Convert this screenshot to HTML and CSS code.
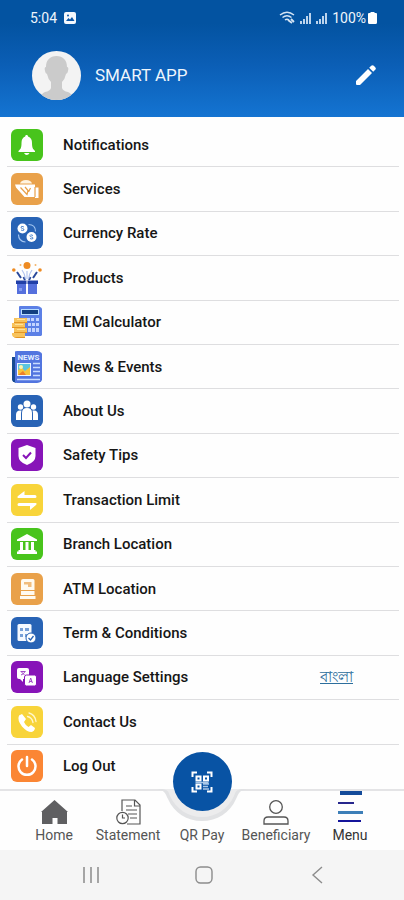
FILE: index.html
```html
<!DOCTYPE html>
<html lang="en">
<head>
<meta charset="utf-8">
<meta name="viewport" content="width=device-width, initial-scale=1">
<title>Smart App</title>
<link rel="stylesheet" href="styles.css">
</head>
<body>
<div class="app">
  <header class="header">
    <div class="status">
      <div class="status-group">
        <span>5:04</span>
        <svg width="12" height="12" viewBox="0 0 12 12"><rect width="12" height="12" rx="2" fill="#f4f8fd"/><path d="M2 9 4.500 6 6 7.500 8 5 10.500 9z" fill="#0a55a6"/><circle cx="4" cy="3.500" r="1" fill="#0a55a6"/></svg>
      </div>
      <div class="status-group status-right">
        <svg width="17" height="13" viewBox="0 0 17 13" fill="none" stroke="#d5e5f5" stroke-width="1.500"><path d="M1 4Q8 -1.500 15 4M3.500 6.500Q8 3 12.500 6.500M6 9Q8 7.500 10 9"/><path d="M9 9l4 3M12 8l3 3" stroke-width="1.800"/></svg>
        <svg width="12" height="12" viewBox="0 0 12 12" fill="#bcd4ed"><path d="M0 9h2v3H0zM3 7h2v5H3zM6 4h2v8H6zM9 1h2v11H9z"/></svg>
        <svg width="12" height="12" viewBox="0 0 12 12" fill="#bcd4ed"><path d="M0 9h2v3H0zM3 7h2v5H3zM6 4h2v8H6zM9 1h2v11H9z"/></svg>
        <span class="battery">100%<svg width="9" height="12" viewBox="0 0 9 12" fill="#fff"><path d="M2.500 0h4v1H8q1 0 1 1v8.500Q9 12 7.500 12h-6Q0 12 0 10.500V2q0-1 1-1h1.500z"/></svg></span>
      </div>
    </div>
    <div class="profile">
      <svg class="avatar" viewBox="0 0 49 49"><defs><clipPath id="face"><circle cx="24.500" cy="24.500" r="24.500"/></clipPath></defs><circle cx="24.500" cy="24.500" r="24.500" fill="#f3f3f3"/><path clip-path="url(#face)" fill="#cbcbcb" d="M24.500 5C31 5 35 9 35 16q2 0 1 4-.5 3-2 3-1 5-4 8v6q1 3 6 4 4 1 5 8H8q1-7 5-8 5-1 6-4v-6q-3-3-4-8-1.500 0-2-3-1-4 1-4C14 9 18 5 24.500 5z"/></svg>
      <h1 class="name">SMART APP</h1>
      <button class="edit" type="button" aria-label="Edit profile"><svg width="20" height="20" viewBox="0 0 20 20" fill="#fff"><path d="M0 16 12 4l4 4L4 20H1q-1 0-1-1zM13.200 2.800l2-2q1.300-1.300 2.600 0l1.400 1.400q1.300 1.300 0 2.600l-2 2z"/></svg></button>
    </div>
  </header>

  <main class="list">
    <a class="row" href="#notifications"><svg class="icon green" viewBox="0 0 32 32" fill="#fff"><path d="M15.500 6c1 0 1.500.6 1.500 1.500 3 .8 4 3.500 4 6.500 0 5 1 6 3 8v1H7.500v-1c2-2 3-3 3-8 0-3 1-5.700 3.700-6.500C14.200 6.600 14.700 6 15.500 6zM13 24h5.500q-1 2-2.750 2T13 24z"/></svg><span>Notifications</span></a>
    <a class="row" href="#services"><svg class="icon orange" viewBox="0 0 32 32"><path d="M9 10.500Q10 7 15 7t6 3.500z" fill="#fff3e0"/><path d="M4 11.500h20v3h3.500V25H24v-1H13.500L5 14.500z" fill="#fff"/><path d="m9.500 14.500 6.500 7 1-4-3-3.500M19.500 15l-2 4M24 14v10" fill="none" stroke="#e9a14a" stroke-width="1.200"/></svg><span>Services</span></a>
    <a class="row" href="#rates"><svg class="icon blue" viewBox="0 0 32 32" fill="#fff"><circle cx="11.500" cy="11.500" r="5"/><circle cx="20.500" cy="20" r="5"/><path d="M17.500 7.500q7 0 7 7M7.500 17.500q0 7 7 7.500" fill="none" stroke="#9fc3f0" stroke-width="1.200"/><path d="M13 10q-3-1.500-3 0t1.500 1.500 1.500 1.500q-1 1-3 0M22 18.500q-3-1.500-3 0t1.500 1.500 1.500 1.500q-1 1-3 0" fill="none" stroke="#3d7cc9" stroke-width=".9"/></svg><span>Currency Rate</span></a>
    <a class="row" href="#products"><svg class="icon" viewBox="0 0 32 32"><circle cx="16" cy="3.500" r="3.500" fill="#ee8b22"/><circle cx="2.800" cy="8" r="1.800" fill="#ee8b22"/><circle cx="29" cy="8" r="1.800" fill="#ee8b22"/><circle cx="9.500" cy="3" r="1" fill="#f3b46a"/><circle cx="24.500" cy="3" r="1" fill="#f3b46a"/><path d="M6 10l4 6M26 10l-4 6M12.500 15l1.500 3M19.500 15 18 18" fill="none" stroke="#2b4a9b" stroke-width="2"/><path d="M11 8q3 4 3.500 9M21 8q-3 4-3.500 9M16 9v8" fill="none" stroke="#b4c5ef" stroke-width="1.200"/><path d="M6 20h9v12H6zM17 20h9v12h-9z" fill="#5570dd"/><path d="M5 18.500h10.500V22H5zM16.500 18.500H27V22H16.500z" fill="#203fa8"/><path d="M8 26h3v3H8z" fill="#849bf0"/></svg><span>Products</span></a>
    <a class="row" href="#emi"><svg class="icon" viewBox="0 0 32 32"><rect x="8" y="0" width="23" height="30" rx="1" fill="#5c80e6"/><path d="M10 3h18v6H10z" fill="#b7ddff"/><path d="M11 4h16v4H11z" fill="#123e80"/><path d="M16 12h3v3h-3zM20 12h3v3h-3zM25 12h3v3h-3zM17 17h3v3h-3zM21 17h3v3h-3zM25 17h3v3h-3zM17 22h3v4h-3zM21 22h3v4h-3zM25 22h3v4h-3z" fill="#c3d4ff"/><path d="M3 12h13v5H3zM1 17h13v5H1zM3 22h13v5H3zM1 27h13v5H1z" fill="#f8c35b"/><path d="M3 16.500h13M1 21.500h13M3 26.500h13M1 31.500h13" stroke="#e39524" stroke-width="1.200"/><path d="M6 13.500h8M4 18.500h8M6 23.500h8" stroke="#ffe29a"/></svg><span>EMI Calculator</span></a>
    <a class="row" href="#news"><svg class="icon" viewBox="0 0 32 32"><path d="M1 6h4v26H3q-2 0-2-2z" fill="#174a91"/><path d="M4 0h27v32H4z" fill="#5275df"/><text class="masthead" x="17.500" y="8.500" text-anchor="middle">NEWS</text><path d="M6 12h14v13H6z" fill="#eef6ff"/><path d="M7 13h12v11H7z" fill="#5cc5df"/><path d="M7 19l4-2 3 3 5-4v8H7z" fill="#f7c43c"/><circle cx="10" cy="16" r="2" fill="#fff3ad"/><path d="m7 24 5-4 3 4z" fill="#ed7f2b"/><path d="M22 12.500h7M22 16.500h7M22 20.500h7M22 24.500h7M6 28.500h23" stroke="#c9dcff" stroke-width="1.500"/></svg><span>News &amp; Events</span></a>
    <a class="row" href="#about"><svg class="icon blue" viewBox="0 0 32 32" fill="#fff"><circle cx="16" cy="9" r="3.500"/><circle cx="9.500" cy="12" r="2.700"/><circle cx="22.500" cy="12" r="2.700"/><path d="M11 25v-7q0-5 5-5t5 5v7zM5 25v-5q0-4.500 4-4.500h1.500Q10 17 10 19v6zM27 25v-5q0-4.500-4-4.500h-1.500Q22 17 22 19v6z"/></svg><span>About Us</span></a>
    <a class="row" href="#safety"><svg class="icon purple" viewBox="0 0 32 32"><path d="m16 6 8.500 3v8q0 6-8.500 9-8.500-3-8.500-9V9z" fill="#fff"/><path d="m12 16 3 3 5-5.500" fill="none" stroke="#8714b8" stroke-width="2"/></svg><span>Safety Tips</span></a>
    <a class="row" href="#limit"><svg class="icon yellow" viewBox="0 0 32 32" fill="#fff"><path d="M13.500 7v4H24q1.500 0 1.500 1.500T24 14H7.500q-2-.5-.5-2zM19 26v-4H8q-1.500 0-1.500-1.500T8 19h16.500q2 .5.500 2z"/></svg><span>Transaction Limit</span></a>
    <a class="row" href="#branch"><svg class="icon green" viewBox="0 0 32 32" fill="#fff"><path d="m16 6 10 5.500V13H6v-1.500zM9 14h3v8H9zM14.500 14h3v8h-3zM20 14h3v8h-3zM7.500 22h17v1.500H26V26H6v-2.500h1.500z"/></svg><span>Branch Location</span></a>
    <a class="row" href="#atm"><svg class="icon orange" viewBox="0 0 32 32"><path d="M12 6h10q1.500 0 1.500 1.500V17H10V8q0-2 2-2zM10 18h13.500v4H10zM9 23h15.500v3H9z" fill="#fffaf0"/><path d="M13 9h7.500v5H17v-2.500h-4z" fill="#f1bd7d"/></svg><span>ATM Location</span></a>
    <a class="row" href="#terms"><svg class="icon blue" viewBox="0 0 32 32"><rect x="6.500" y="7" width="14" height="17" rx="1.500" fill="#f5f9ff"/><path d="M9 11h3v3H9zM9 17h3v3H9zM14 11h4v3h-4zM14 17h3v3h-3z" fill="#769fd7"/><circle cx="20" cy="21" r="5" fill="#fff" stroke="#2863b5"/><path d="m17.500 21 2 2 3-4" fill="none" stroke="#2863b5" stroke-width="1.300"/></svg><span>Term &amp; Conditions</span></a>
    <div class="row"><svg class="icon purple" viewBox="0 0 32 32"><rect x="6" y="7" width="12" height="11" rx="2" fill="#fff"/><path d="m8 17h4v4z" fill="#fff"/><rect x="13.500" y="14" width="12" height="11" rx="2" fill="#fff" stroke="#8714b8"/><path d="M9.500 10.500h5M12 10v1M10 14q3-1 4-3.500M10.500 11l3 3M18 22l1.700-5 1.700 5M18.500 20.500h2.500" fill="none" stroke="#a34bc9"/></svg><a href="#settings">Language Settings</a><a class="language" href="#bangla" lang="bn">বাংলা</a></div>
    <a class="row" href="#contact"><svg class="icon yellow" viewBox="0 0 32 32"><path d="M8 9.500 11 8l4 5-2 3q1.500 3.500 4.500 5l2.500-2 4 3q-.5 3.500-3.500 4-4.500 0-9.500-5.500Q6 14 8 9.500z" fill="#fff"/><path d="M16.500 10.500q4.500 1 5.500 6M18 7q6 1.500 7 8.500" fill="none" stroke="#fff7cc" stroke-width="1.300" stroke-linecap="round"/></svg><span>Contact Us</span></a>
    <a class="row" href="#logout"><svg class="icon flame" viewBox="0 0 32 32" fill="none" stroke="#fff" stroke-width="2.500" stroke-linecap="round"><path d="M16 7v9M11 9.500a8.500 8.500 0 1 0 10 0"/></svg><span>Log Out</span></a>
  </main>

  <nav class="nav">
    <svg class="notch" width="92" height="33" viewBox="0 0 92 33"><path d="M0 0h92C83 1 83 4 80 10 74 24 61 32 46 32S18 24 12 10C9 4 9 1 0 0z" fill="#e1e2e4"/><path d="M4 0h84C80 0 80 2 78 7 72 20 60 28 46 28S20 20 14 7C12 2 12 0 4 0z" fill="#ececed"/></svg>
    <a class="tab" href="#home"><svg width="27" height="25" viewBox="0 0 27 25"><path d="M13.500 0 27 12h-1v12H16.500v-6h-5v6H1V12H0z" fill="#5f5f61"/></svg><span>Home</span></a>
    <a class="tab" href="#statement"><svg width="25" height="26" viewBox="0 0 25 26" fill="none" stroke="#555" stroke-width="1.200"><path d="M6 12V1h13l5 5v19H11M18.500 1v6H24M10 7h6M10 11h11M12 15h9M14 19h7"/><circle cx="6.500" cy="19" r="5.700"/><path d="M6.500 15.500V19H9"/></svg><span>Statement</span></a>
    <a class="tab" href="#qr"><span class="qr"><svg width="24" height="24" viewBox="0 0 24 24" fill="none" stroke="#fff" stroke-width="2"><path d="M2.500 7V2.500H7M17 2.500h4.500V7M21.500 17v4.500H17M7 21.500H2.500V17"/><path d="M6.500 6.500h4v4h-4zM14 6.500h4v4h-4zM6.500 14.500h4v4h-4z"/><path d="M13 14h6M13 16.500h5M13 19h6M5.500 12.500h13" stroke="#a9c8e8" stroke-width="1.300"/></svg></span><span>QR Pay</span></a>
    <a class="tab" href="#beneficiary"><svg width="26" height="25" viewBox="0 0 26 25" fill="none" stroke="#555" stroke-width="1.300"><circle cx="13" cy="7" r="6.300"/><path d="M1 24v-3q0-4 4-4h16q4 0 4 4v3z"/></svg><span>Beneficiary</span></a>
    <a class="tab active" href="#menu"><svg width="26" height="34" viewBox="0 0 26 34"><path d="M3 0h22v4H3z" fill="#144b9a"/><path d="M1 11h16v2H1z" fill="#27278d"/><path d="M1 20h25v3H1z" fill="#3d7fb8"/><path d="M1 29h23v2H1z" fill="#14149a"/></svg><span>Menu</span></a>
  </nav>

  <footer class="system">
    <button type="button" aria-label="Recent apps"><svg width="18" height="18" viewBox="0 0 18 18" stroke="#929292" stroke-width="1.600"><path d="M2 1v16M9 1v16M16 1v16"/></svg></button>
    <button type="button" aria-label="Home"><svg width="18" height="18" viewBox="0 0 18 18" fill="none" stroke="#8c8c8c" stroke-width="1.400"><rect x="1" y="1" width="16" height="16" rx="4.500"/></svg></button>
    <button type="button" aria-label="Back"><svg width="18" height="18" viewBox="0 0 18 18" fill="none" stroke="#8c8c8c" stroke-width="1.400"><path d="M14 1 5 9l9 8"/></svg></button>
  </footer>
</div>
</body>
</html>
```
FILE: styles.css
```css
* { box-sizing: border-box; }

body {
  margin: 0;
  font-family: Roboto, "Liberation Sans", sans-serif;
  background: #fefefe;
  color: #161616;
}

a { color: inherit; text-decoration: none; }
svg { display: block; flex: none; }
button { display: grid; place-items: center; padding: 0; border: 0; background: none; }

.app { display: flex; flex-direction: column; min-height: 100vh; }

.header {
  height: 117px;
  color: #eef5fc;
  background: linear-gradient(#0353a1 0, #0353a1 20%, #0b5eb5 55%, #1474d2 100%);
}

.status {
  display: flex;
  justify-content: space-between;
  align-items: center;
  height: 35px;
  padding: 0 27px 0 30px;
  font-size: 14px;
}
.status-group { display: flex; align-items: center; gap: 7px; }
.status-right { gap: 4px; }
.battery { display: flex; align-items: center; gap: 2px; }

.profile {
  display: flex;
  align-items: center;
  gap: 14px;
  height: 80px;
  padding: 0 28px 0 32px;
}
.avatar { width: 49px; height: 49px; }
.name { margin: 0; font-size: 17px; font-weight: 400; }
.edit { margin-left: auto; }

.list {
  flex: 1;
  display: grid;
  grid-auto-rows: 1fr;
  padding: 6px 5px 0 7px;
}
.row {
  display: flex;
  align-items: center;
  gap: 20px;
  min-height: 44px;
  padding: 0 0 0 4px;
  border-bottom: 1px solid #dedee0;
  font-size: 15px;
  font-weight: 500;
}
.row:last-child { border-bottom-color: transparent; }

.icon { width: 32px; height: 32px; border-radius: 6px; }
.green { background: #48c41c; }
.orange { background: #e9a14a; }
.blue { background: #2863b5; }
.purple { background: #8714b8; }
.yellow { background: #f8d43a; }
.flame { background: #fb8634; }
.masthead { font-size: 8px; font-weight: 700; fill: #e2edff; }

.language {
  margin: 0 46px 0 auto;
  color: #2d6e9c;
  text-decoration: underline;
}

.nav {
  position: relative;
  display: grid;
  grid-template-columns: repeat(5, 1fr);
  height: 61px;
  padding: 0 17px;
  border-top: 2px solid #e4e4e6;
  background: #fefefe;
}
.notch { position: absolute; top: -2px; left: 50%; transform: translateX(-50%); }
.tab {
  position: relative;
  display: flex;
  flex-direction: column;
  align-items: center;
  justify-content: flex-end;
  gap: 2px;
  padding-bottom: 7px;
  font-size: 14px;
  line-height: 16px;
  color: #555;
  white-space: nowrap;
}
.active { color: #333; }
.qr {
  position: absolute;
  bottom: 39px;
  display: grid;
  place-items: center;
  width: 59px;
  height: 59px;
  border-radius: 50%;
  background: #0853a4;
}

.system {
  display: grid;
  grid-template-columns: repeat(3, 1fr);
  height: 50px;
  padding: 0 30px 0 34px;
  background: #f5f5f5;
}
```
